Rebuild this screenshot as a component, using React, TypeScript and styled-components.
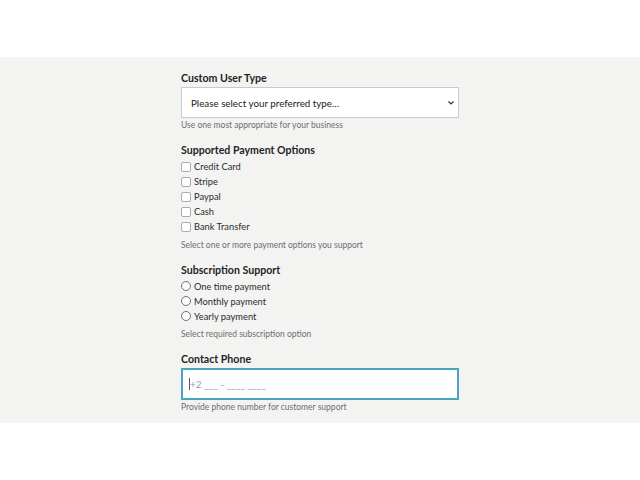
import styled, { createGlobalStyle } from 'styled-components';

const GlobalStyle = createGlobalStyle`
  html, body {
    margin: 0;
    padding: 0;
    background: #ffffff;
    font-family: Lato, "Noto Sans", sans-serif;
    color: #212529;
  }
`;

const Page = styled.div`
  padding-top: 57px;
  height: 480px;
  box-sizing: border-box;
`;

const Band = styled.div`
  background: #f3f3f1;
  padding: 14px 0 10px;
  display: flex;
  justify-content: center;
`;

const Form = styled.form`
  width: 278px;
  display: flex;
  flex-direction: column;
`;

const Field = styled.div`
  display: flex;
  flex-direction: column;
  margin-bottom: 12px;

  &:last-child {
    margin-bottom: 0;
  }
`;

const Label = styled.div`
  font-size: 10.6px;
  font-weight: 700;
  line-height: 14px;
  color: #1f2327;
  margin-bottom: 2px;
`;

const SelectBox = styled.div`
  height: 31px;
  box-sizing: border-box;
  border: 1px solid #c9cacb;
  background: #ffffff;
  display: flex;
  align-items: center;
  justify-content: space-between;
  padding: 0 3px 0 9px;
  font-size: 9.8px;
  color: #222;
`;

const Chevron = styled.svg`
  width: 8px;
  height: 8px;
`;

const Help = styled.div`
  font-size: 8.5px;
  line-height: 12px;
  color: #6c6f72;
  margin-top: 1px;
`;

const OptionList = styled.div`
  display: flex;
  flex-direction: column;
  margin-bottom: 3.5px;
`;

const Option = styled.label`
  display: flex;
  align-items: center;
  height: 15px;
  font-size: 9.3px;
  color: #2a2d30;
  gap: 3px;
`;

const Box = styled.span<{ $round?: boolean }>`
  width: 10px;
  height: 10px;
  box-sizing: border-box;
  border: 1px solid ${({ $round }) => ($round ? '#6f7275' : '#a9abad')};
  border-radius: ${({ $round }) => ($round ? '50%' : '2px')};
  background: #ffffff;
  flex-shrink: 0;
`;

const PhoneInput = styled.div`
  height: 32px;
  box-sizing: border-box;
  border: 2px solid #4aa6bd;
  background: #ffffff;
  display: flex;
  align-items: center;
  padding-left: 6px;
  font-size: 10px;
  color: #9a9c9e;
`;

const Caret = styled.span`
  width: 1px;
  height: 12px;
  background: #555;
`;

const payments = ['Credit Card', 'Stripe', 'Paypal', 'Cash', 'Bank Transfer'];
const plans = ['One time payment', 'Monthly payment', 'Yearly payment'];

export default function App() {
  return (
    <Page>
      <GlobalStyle />
      <Band>
        <Form>
          <Field>
            <Label>Custom User Type</Label>
            <SelectBox>
              <span>Please select your preferred type...</span>
              <Chevron viewBox="0 0 8 8">
                <path d="M1.5 2.5 L4 5 L6.5 2.5" fill="none" stroke="#333" strokeWidth="1.2" />
              </Chevron>
            </SelectBox>
            <Help>Use one most appropriate for your business</Help>
          </Field>

          <Field>
            <Label>Supported Payment Options</Label>
            <OptionList>
              {payments.map((p) => (
                <Option key={p}>
                  <Box />
                  {p}
                </Option>
              ))}
            </OptionList>
            <Help>Select one or more payment options you support</Help>
          </Field>

          <Field>
            <Label>Subscription Support</Label>
            <OptionList>
              {plans.map((p) => (
                <Option key={p}>
                  <Box $round />
                  {p}
                </Option>
              ))}
            </OptionList>
            <Help>Select required subscription option</Help>
          </Field>

          <Field>
            <Label>Contact Phone</Label>
            <PhoneInput>
              <Caret />
              +2 ___ - ____ ____
            </PhoneInput>
            <Help>Provide phone number for customer support</Help>
          </Field>
        </Form>
      </Band>
    </Page>
  );
}
